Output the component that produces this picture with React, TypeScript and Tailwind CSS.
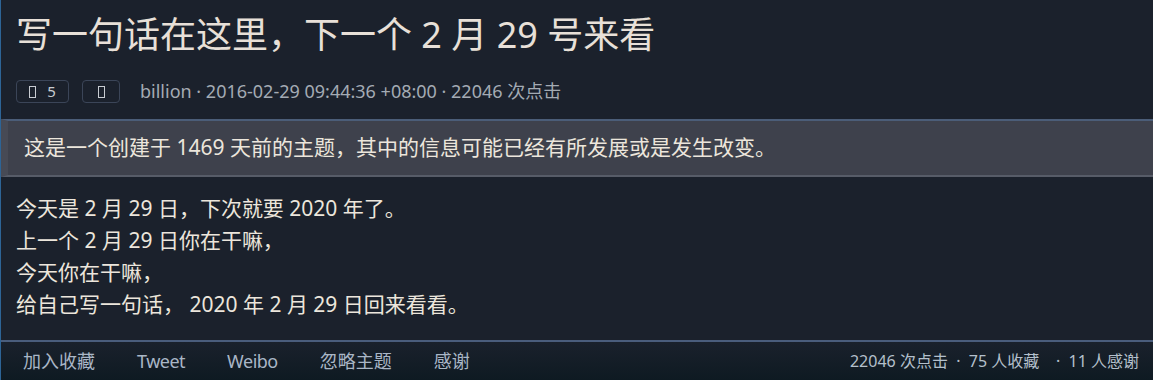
import React from "react";

const Tofu = () => (
  <span className="inline-block w-[7px] h-[12px] border border-[#c8ccd2]" />
);

export default function App() {
  const font = { fontFamily: '"Noto Sans", "Noto Sans CJK SC", sans-serif' };
  return (
    <div
      className="w-[1153px] h-[380px] bg-[#1b212c] border-l border-[#2d6496] flex flex-col overflow-hidden"
      style={font}
    >
      <div className="px-[15px] pt-[13px] h-[68px]">
        <h1 className="text-[36px] leading-[44px] text-[#e8e0d8] font-normal whitespace-nowrap">
          写一句话在这里，下一个 2 月 29 号来看
        </h1>
      </div>
      <div className="flex items-center px-[15px] h-[51px] pb-[4px]">
        <div className="flex items-center gap-[13px]">
          <span className="w-[53px] h-[23px] rounded-[4px] border border-[#3b4558] flex items-center justify-center gap-[11px] text-[15px] text-[#c8ccd2]">
            <Tofu />
            <span>5</span>
          </span>
          <span className="w-[38px] h-[23px] rounded-[4px] border border-[#3b4558] flex items-center justify-center">
            <Tofu />
          </span>
        </div>
        <span className="ml-[20px] text-[18px] text-[#a4abb4] whitespace-nowrap">
          billion · 2016-02-29 09:44:36 +08:00 · 22046 次点击
        </span>
      </div>
      <div className="border-t-2 border-[#4b5d78] border-b-2 border-b-[#575c68] border-l-[7px] border-l-[#474a55] bg-[#3e414c] h-[58px] flex items-center pl-[16px]">
        <span className="text-[21px] text-[#ece6dc] whitespace-nowrap">
          这是一个创建于 1469 天前的主题，其中的信息可能已经有所发展或是发生改变。
        </span>
      </div>
      <div className="px-[15px] pt-[15px] text-[21px] leading-[32px] text-[#ece6dc] h-[163px]">
        <div>今天是 2 月 29 日，下次就要 2020 年了。</div>
        <div>上一个 2 月 29 日你在干嘛，</div>
        <div>今天你在干嘛，</div>
        <div>给自己写一句话， 2020 年 2 月 29 日回来看看。</div>
      </div>
      <div className="flex-1 border-t-2 border-[#4a5d7c] bg-gradient-to-b from-[#1a212c] to-[#0e1a22] flex items-center justify-between pl-[22px] pr-[14px]">
        <div className="flex items-center gap-[42px] text-[18px] text-[#a9b6c6]">
          <span>加入收藏</span>
          <span className="tracking-[-0.5px]">Tweet</span>
          <span className="tracking-[-0.5px]">Weibo</span>
          <span>忽略主题</span>
          <span>感谢</span>
        </div>
        <div className="text-[16px] text-[#b4c0cc] whitespace-nowrap">
          22046 次点击 &nbsp;·&nbsp; 75 人收藏 &nbsp;&nbsp;&nbsp;·&nbsp; 11 人感谢
        </div>
      </div>
    </div>
  );
}
